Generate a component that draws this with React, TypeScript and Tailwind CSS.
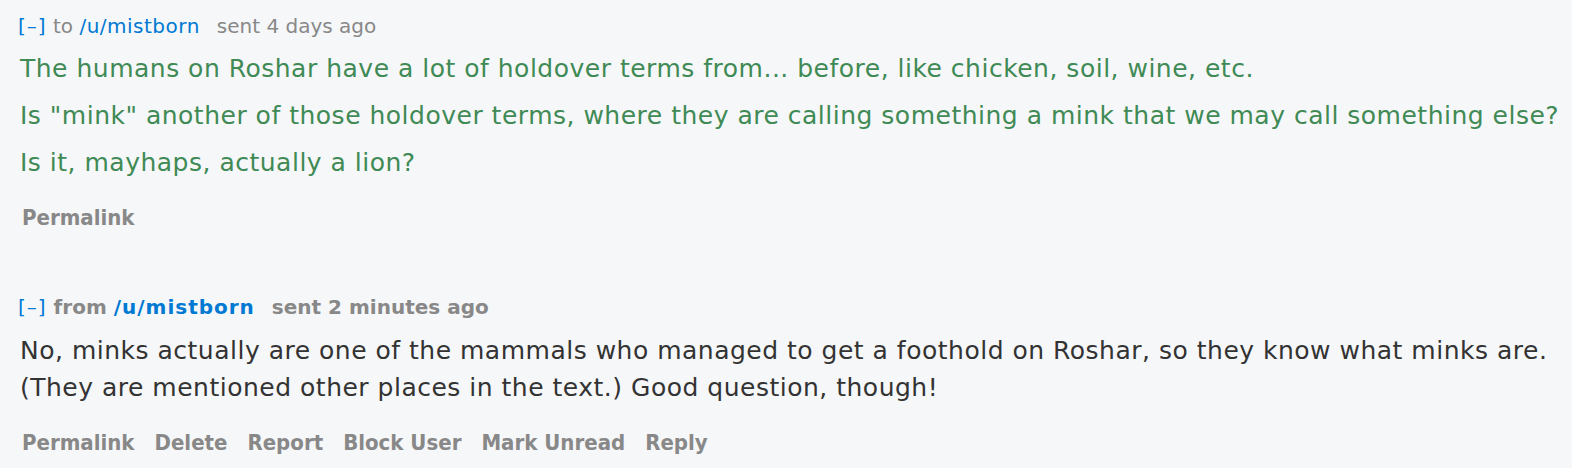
const body = { fontFamily: '"DejaVu Sans", Verdana, sans-serif' };
const action = { fontFamily: '"DejaVu Sans Condensed", "DejaVu Sans", sans-serif' };

function Actions({ items }: { items: string[] }) {
  return (
    <ul className="flex gap-[20px] text-[22px] leading-[26px] font-bold text-[#888888]" style={action}>
      {items.map((a) => (
        <li key={a}>{a}</li>
      ))}
    </ul>
  );
}

function Toggle() {
  return <span className="text-[#0079d3] font-normal tracking-[1px]">[–]</span>;
}

export default function App() {
  return (
    <div className="w-[1572px] h-[468px] bg-[#f6f7f9] pl-[18px] pt-[13px] overflow-hidden" style={body}>
      <div>
        <div className="text-[20px] leading-[26px] text-[#888888]">
          <Toggle /> to <span className="text-[#0079d3] tracking-[0.5px]">/u/mistborn</span>
          <span className="ml-[17px]">sent 4 days ago</span>
        </div>
        <div className="mt-[6px] text-[25px] tracking-[0.5px] leading-[47px] text-[#3f8a55] pl-[2px]">
          <p>The humans on Roshar have a lot of holdover terms from... before, like chicken, soil, wine, etc.</p>
          <p>Is "mink" another of those holdover terms, where they are calling something a mink that we may call something else?</p>
          <p>Is it, mayhaps, actually a lion?</p>
        </div>
        <div className="mt-[19px] pl-[4px]">
          <Actions items={["Permalink"]} />
        </div>
      </div>

      <div className="mt-[63px]">
        <div className="text-[20px] leading-[26px] text-[#888888] font-bold">
          <Toggle /> from <span className="text-[#0079d3] tracking-[1px]">/u/mistborn</span>
          <span className="ml-[17px]">sent 2 minutes ago</span>
        </div>
        <div className="mt-[12px] text-[25px] tracking-[0.5px] leading-[37px] text-[#333333] pl-[2px]">
          <p>
            No, minks actually are one of the mammals who managed to get a foothold on Roshar, so they know what minks are.
            <br />
            (They are mentioned other places in the text.) Good question, though!
          </p>
        </div>
        <div className="mt-[24px] pl-[4px]">
          <Actions items={["Permalink", "Delete", "Report", "Block User", "Mark Unread", "Reply"]} />
        </div>
      </div>
    </div>
  );
}
